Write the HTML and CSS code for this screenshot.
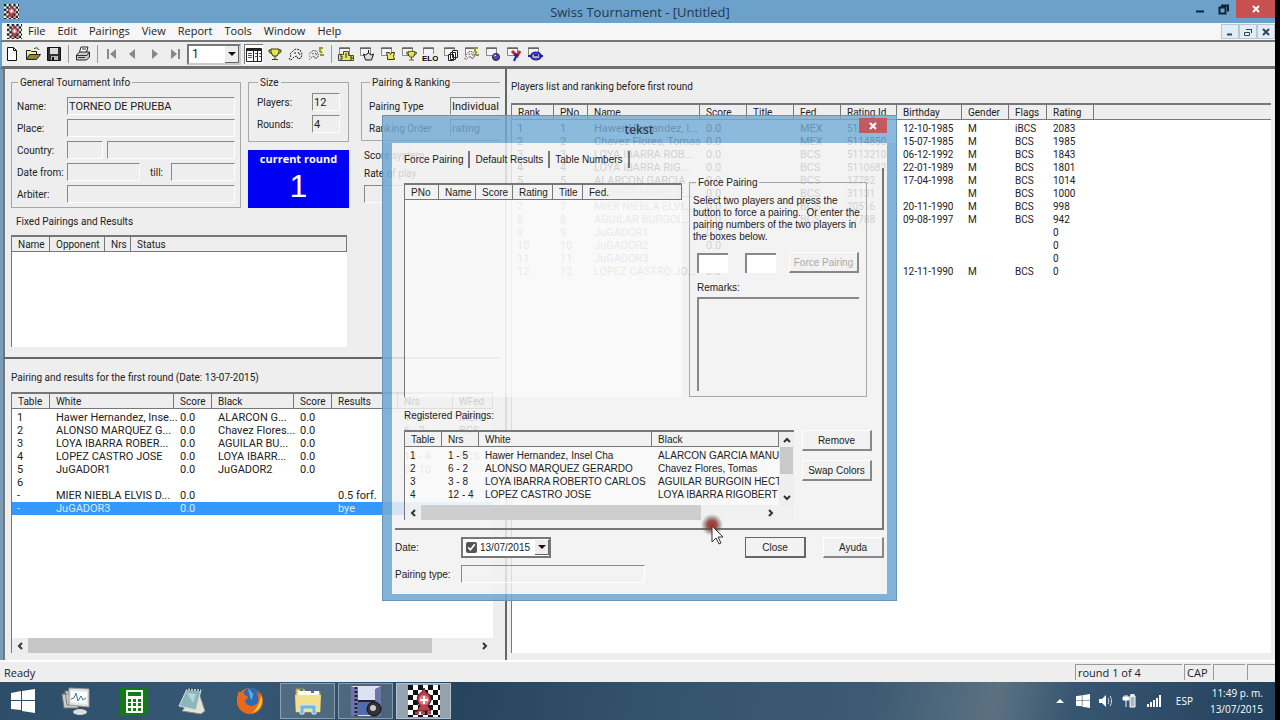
FILE: index.html
```
<!DOCTYPE html>
<html lang="en">
<head>
    <meta charset="UTF-8">
    <meta name="viewport" content="width=device-width, initial-scale=1.0">
    <title>Swiss Tournament - [Untitled]</title>
    <link rel="stylesheet" href="styles.css">
</head>
<body>
    <!-- shared icon shapes -->
    <svg class="defs" width="0" height="0">
        <defs>
            <pattern id="board" width="10" height="10" patternUnits="userSpaceOnUse">
                <rect width="10" height="10" fill="#fff"/>
                <path d="M0 0h5v5H0zM5 5h5v5H5z" fill="#111"/>
            </pattern>
            <symbol id="chess" viewBox="0 0 32 32">
                <rect width="32" height="32" fill="url(#board)"/>
                <path d="M16 3l2 4 4 3 1 6-3 5 3 5H9l3-5-3-5 1-6 4-3z" fill="#b8404e" stroke="#4c1720"/>
                <circle cx="16" cy="15" r="5" fill="#d97c84"/>
                <path d="M16 11v8M12 15h8" stroke="#fff" stroke-width="2"/>
                <path d="M7 28h18" stroke="#b8404e" stroke-width="3" stroke-dasharray="4 2"/>
            </symbol>
            <symbol id="sheet" viewBox="0 0 16 16">
                <path d="M1.500 1.500h10v8h-10z" fill="#f4f4f4" stroke="#888"/>
                <path d="M1 2.500h11" stroke="#666"/>
            </symbol>
            <symbol id="cup" viewBox="0 0 16 16">
                <path d="M4 3h8v3l-2 4H6L4 6zM4 4H2v2l3 2M12 4h2v2l-3 2M8 10v3M5 13.500h6" fill="#e4e650" stroke="#3a3a10"/>
            </symbol>
            <symbol id="horse" viewBox="0 0 16 16">
                <path d="M2 8l4-4 2-1 4 1 2 4-1 4-3 1-1-3-3 1-3 3-2-1 2-3z" fill="#eee" stroke="#222" stroke-dasharray="2 1"/>
                <path d="M6 7h2M10 6l2 3" stroke="#222"/>
            </symbol>
            <symbol id="winlogo" viewBox="0 0 24 24">
                <path d="M0 4l10-2v9H0zM11 2l13-2v11H11zM0 12h10v9L0 20zM11 12h13v12l-13-2z" fill="#fff"/>
            </symbol>
        </defs>
    </svg>

    <div class="desktop">
        <header class="title-bar">
            <svg class="app-icon"><use href="#chess"/></svg>
            <h1 class="window-title">Swiss Tournament - [Untitled]</h1>
            <div class="window-buttons">
                <button aria-label="Minimize"><svg width="10" height="10"><path d="M1 7.500h8" stroke="#123" stroke-width="2"/></svg></button>
                <button aria-label="Restore"><svg width="12" height="12"><path d="M1.500 4.500h6v6h-6zM3 2.500h7v6" fill="none" stroke="#123" stroke-width="2"/></svg></button>
                <button class="close" aria-label="Close"><svg width="10" height="10"><path d="M2 2l6 6M8 2L2 8" stroke="#fff" stroke-width="2"/></svg></button>
            </div>
        </header>

        <nav class="menu-bar">
            <svg class="app-icon"><use href="#chess"/></svg>
            <a href="#">File</a>
            <a href="#">Edit</a>
            <a href="#">Pairings</a>
            <a href="#">View</a>
            <a href="#">Report</a>
            <a href="#">Tools</a>
            <a href="#">Window</a>
            <a href="#">Help</a>
            <div class="mdi-buttons">
                <button aria-label="Minimize document"><svg width="10" height="10"><path d="M2 7.500h5" stroke="#345" stroke-width="2"/></svg></button>
                <button aria-label="Restore document"><svg width="10" height="10"><path d="M1.500 5.500h5v3h-5zM3 2.500h6M8.500 3v3" fill="none" stroke="#345"/></svg></button>
                <button aria-label="Close document"><svg width="10" height="10"><path d="M2 2l6 6M8 2L2 8" stroke="#345" stroke-width="2"/></svg></button>
            </div>
        </nav>

        <div class="toolbar">
            <button aria-label="New"><svg viewBox="0 0 16 16"><path d="M3.500 1.500h6l3 3v10h-9zM9.500 1.500v3h3" fill="#fff" stroke="#111"/></svg></button>
            <button aria-label="Open"><svg viewBox="0 0 16 16"><path d="M1.500 13.500v-9h4l1 1h5v3" fill="#f0ee8a" stroke="#222"/><path d="M1.500 13.500l3-5h11l-4 5z" fill="#8c8a20" stroke="#222"/><path d="M9 3c2-2 4-1 5 1" fill="none" stroke="#222"/></svg></button>
            <button aria-label="Save"><svg viewBox="0 0 16 16"><path d="M1.500 1.500h13v13h-13z" fill="#333" stroke="#111"/><path d="M4 2h8v6H4z" fill="#ddd"/><path d="M5 10h7v4H5z" fill="#bbb"/><path d="M6 11h2v3H6z" fill="#111"/></svg></button>
            <span class="tool-line"></span>
            <button aria-label="Print"><svg viewBox="0 0 16 16"><path d="M4.500 6l1.500-5h7l-1.500 5" fill="#fff" stroke="#222"/><path d="M1.500 9l3-3h10v5l-3 3h-10z" fill="#ccc" stroke="#222"/><path d="M2 9.500h10l2-3M3 11.500h7M7 3h4" stroke="#333" fill="none"/></svg></button>
            <span class="tool-line"></span>
            <button aria-label="First round" disabled><svg viewBox="0 0 16 16"><path d="M3 3h2v10H3zM12 3v10L6 8z" fill="#888"/></svg></button>
            <button aria-label="Previous round" disabled><svg viewBox="0 0 16 16"><path d="M10 3v10L4 8z" fill="#888"/></svg></button>
            <button aria-label="Next round" disabled><svg viewBox="0 0 16 16"><path d="M6 3v10l6-5z" fill="#888"/></svg></button>
            <button aria-label="Last round" disabled><svg viewBox="0 0 16 16"><path d="M11 3h2v10h-2zM4 3v10l6-5z" fill="#888"/></svg></button>
            <div class="combo">
                <select aria-label="Round"><option>1</option></select>
                <span class="combo-arrow"></span>
            </div>
            <button class="pressed" aria-label="Overview"><svg viewBox="0 0 16 16"><path d="M.5 1.500h15v13H.5z" fill="#fff" stroke="#222"/><path d="M0 3h16" stroke="#222" stroke-width="2"/><path d="M7.500 3v11M11.500 3v11" stroke="#222"/><path d="M2 6.500h4M2 8.500h4M2 10.500h4M9 6.500h2M9 9.500h2M13 6.500h2M13 9.500h2" stroke="#555"/></svg></button>
            <button aria-label="Ranking"><svg viewBox="0 0 16 16"><use href="#cup"/></svg></button>
            <button aria-label="Players"><svg viewBox="0 0 16 16"><use href="#horse"/></svg></button>
            <button aria-label="Pairings"><svg viewBox="0 0 16 16"><use href="#horse" x="-2" y="2" width="13" height="13"/><path d="M14 2h-3v3l2 2M15 9h-4" fill="none" stroke="#999a22" stroke-width="2"/></svg></button>
            <span class="tool-line"></span>
            <button aria-label="Podium"><svg viewBox="0 0 16 16"><use href="#sheet"/><path d="M.5 8.500h5v-3h5v4h5v5H.5z" fill="#e8ea5c" stroke="#444"/><path d="M2 10h2v3H2M8 7v5M12 11h2v2h-2" fill="none" stroke="#222"/></svg></button>
            <button aria-label="King report"><svg viewBox="0 0 16 16"><use href="#sheet"/><path d="M4.500 8l2 1 3-2 3 2 2-1-2 6h-6zM9.500 4v3" fill="#ddd" stroke="#111"/></svg></button>
            <button aria-label="Cross table"><svg viewBox="0 0 16 16"><use href="#sheet"/><path d="M6.500 6.500h3l1 2 1-2h3l-1 4 1 3h-7v-3z" fill="#e8ea5c" stroke="#333"/></svg></button>
            <button aria-label="Cup report"><svg viewBox="0 0 16 16"><use href="#sheet"/><use href="#cup" x="4" y="3" width="13" height="13"/></svg></button>
            <button aria-label="ELO report"><svg viewBox="0 0 16 16"><use href="#sheet"/><path d="M0 8h16v8H0z" fill="#eee"/><text class="elo" x="0" y="15">ELO</text></svg></button>
            <button aria-label="Cards"><svg viewBox="0 0 16 16"><use href="#sheet"/><path d="M9.500 4.500h5v7h-5zM7.500 6.500h5v7h-5zM5.500 8.500h5v6h-5z" fill="#fff" stroke="#222"/></svg></button>
            <button aria-label="Horse report"><svg viewBox="0 0 16 16"><use href="#sheet"/><use href="#horse" y="3" width="12" height="12"/><path d="M14 2h-3v3l2 2M15 9h-3" fill="none" stroke="#999a22" stroke-width="2"/></svg></button>
            <button aria-label="Web export"><svg viewBox="0 0 16 16"><use href="#sheet"/><circle cx="11" cy="11" r="3.500" fill="#4a4ab0" stroke="#223"/><path d="M9 10l2-1" stroke="#fff"/></svg></button>
            <button aria-label="Federation export"><svg viewBox="0 0 16 16"><use href="#sheet"/><path d="M6 5l5 5 3-5" fill="none" stroke="#c23" stroke-width="3"/><path d="M11 8l-3 7M8 9h4" stroke="#22a" stroke-width="2"/></svg></button>
            <button aria-label="Connect"><svg viewBox="0 0 16 16"><use href="#sheet"/><ellipse cx="9" cy="10" rx="5" ry="3.500" fill="#aab" stroke="#22a" stroke-width="2"/><path d="M1 10h4M12 10h4M7 9h4" stroke="#22a" stroke-width="2"/></svg></button>
        </div>

        <main class="workspace">
            <div class="left-column">
                <section class="info-panel">
                    <div class="info-top">
                        <fieldset class="group general">
                            <legend>General Tournament Info</legend>
                            <div class="field-row"><label for="t-name">Name:</label><input id="t-name" value="TORNEO DE PRUEBA" readonly></div>
                            <div class="field-row"><label for="t-place">Place:</label><input id="t-place" readonly></div>
                            <div class="field-row"><label for="t-country">Country:</label><input id="t-country" class="code" readonly><input aria-label="Country name" readonly></div>
                            <div class="field-row"><label for="t-from">Date from:</label><input id="t-from" class="date" readonly><label class="till" for="t-till">till:</label><input id="t-till" readonly></div>
                            <div class="field-row"><label for="t-arbiter">Arbiter:</label><input id="t-arbiter" readonly></div>
                        </fieldset>
                        <div class="size-column">
                            <fieldset class="group size">
                                <legend>Size</legend>
                                <div class="field-row"><label for="t-players">Players:</label><input id="t-players" value="12" readonly></div>
                                <div class="field-row"><label for="t-rounds">Rounds:</label><input id="t-rounds" value="4" readonly></div>
                            </fieldset>
                            <div class="current-round">
                                <span>current round</span>
                                <strong>1</strong>
                            </div>
                        </div>
                        <div class="ranking-column">
                            <fieldset class="group ranking">
                                <legend>Pairing &amp; Ranking</legend>
                                <div class="field-row"><label for="t-type">Pairing Type</label><input id="t-type" value="Individual compet" readonly></div>
                                <div class="field-row"><label for="t-order">Ranking Order</label><input id="t-order" value="rating" readonly></div>
                            </fieldset>
                            <div class="rates">
                                <p>Score system</p>
                                <label for="t-rate">Rate of play</label>
                                <input id="t-rate" readonly>
                            </div>
                        </div>
                    </div>
                    <h2 class="caption fixed-caption">Fixed Pairings and Results</h2>
                    <div class="list fixed-list">
                        <table>
                            <thead><tr><th class="w38">Name</th><th class="w55">Opponent</th><th class="w26">Nrs</th><th>Status</th></tr></thead>
                        </table>
                    </div>
                </section>

                <section class="pairing-panel">
                    <h2 class="caption">Pairing and results for the first round (Date: 13-07-2015)</h2>
                    <div class="list pairing-list">
                        <table>
                            <thead><tr><th class="w38">Table</th><th class="w124">White</th><th class="w38">Score</th><th class="w82">Black</th><th class="w38">Score</th><th class="w66">Results</th><th class="w55">Nrs</th><th>WFed</th></tr></thead>
                            <tbody>
                                <tr><td>1</td><td>Hawer Hernandez, Inse...</td><td>0.0</td><td>ALARCON G...</td><td>0.0</td><td></td><td>1 - 5</td><td>MEX</td></tr>
                                <tr><td>2</td><td>ALONSO MARQUEZ G...</td><td>0.0</td><td>Chavez Flores...</td><td>0.0</td><td></td><td>6 - 2</td><td>BCS</td></tr>
                                <tr><td>3</td><td>LOYA IBARRA ROBER...</td><td>0.0</td><td>AGUILAR BU...</td><td>0.0</td><td></td><td>3 - 8</td><td>BCS</td></tr>
                                <tr><td>4</td><td>LOPEZ CASTRO JOSE</td><td>0.0</td><td>LOYA IBARR...</td><td>0.0</td><td></td><td>12 - 4</td><td>BCS</td></tr>
                                <tr><td>5</td><td>JuGADOR1</td><td>0.0</td><td>JuGADOR2</td><td>0.0</td><td></td><td>9 - 10</td><td></td></tr>
                                <tr><td>6</td><td></td><td></td><td></td><td></td><td></td><td></td><td></td></tr>
                                <tr><td>-</td><td>MIER NIEBLA ELVIS D...</td><td>0.0</td><td></td><td></td><td>0.5 forf.</td><td></td><td></td></tr>
                                <tr class="selected"><td>-</td><td>JuGADOR3</td><td>0.0</td><td></td><td></td><td>bye</td><td></td><td></td></tr>
                            </tbody>
                        </table>
                        <div class="h-scroll">
                            <button aria-label="Scroll left"><svg width="8" height="8"><path d="M6 1L3 4l3 3" fill="none" stroke="#333" stroke-width="2"/></svg></button>
                            <div class="track"><div class="thumb"></div></div>
                            <button aria-label="Scroll right"><svg width="8" height="8"><path d="M2 1l3 3-3 3" fill="none" stroke="#333" stroke-width="2"/></svg></button>
                        </div>
                    </div>
                </section>
            </div>

            <section class="players-panel">
                <h2 class="caption">Players list and ranking before first round</h2>
                <div class="list players-list">
                    <table>
                        <thead><tr><th class="w42">Rank</th><th class="w34">PNo</th><th class="w112">Name</th><th class="w47">Score</th><th class="w47">Title</th><th class="w47">Fed</th><th class="w56">Rating Id</th><th class="w65">Birthday</th><th class="w47">Gender</th><th class="w38">Flags</th><th class="w47">Rating</th><th class="rest"></th></tr></thead>
                        <tbody>
                            <tr><td>1</td><td>1</td><td>Hawer Hernandez, I...</td><td>0.0</td><td></td><td>MEX</td><td>5112346</td><td>12-10-1985</td><td>M</td><td>iBCS</td><td>2083</td><td></td></tr>
                            <tr><td>2</td><td>2</td><td>Chavez Flores, Tomas</td><td>0.0</td><td></td><td>MEX</td><td>5114850</td><td>15-07-1985</td><td>M</td><td>BCS</td><td>1985</td><td></td></tr>
                            <tr><td>3</td><td>3</td><td>LOYA IBARRA ROB...</td><td>0.0</td><td></td><td>BCS</td><td>5113210</td><td>06-12-1992</td><td>M</td><td>BCS</td><td>1843</td><td></td></tr>
                            <tr><td>4</td><td>4</td><td>LOYA IBARRA RIG...</td><td>0.0</td><td></td><td>BCS</td><td>5110682</td><td>22-01-1989</td><td>M</td><td>BCS</td><td>1801</td><td></td></tr>
                            <tr><td>5</td><td>5</td><td>ALARCON GARCIA ...</td><td>0.0</td><td></td><td>BCS</td><td>17782</td><td>17-04-1998</td><td>M</td><td>BCS</td><td>1014</td><td></td></tr>
                            <tr><td>6</td><td>6</td><td>ALONSO MARQUE...</td><td>0.0</td><td></td><td>BCS</td><td>31131</td><td></td><td>M</td><td>BCS</td><td>1000</td><td></td></tr>
                            <tr><td>7</td><td>7</td><td>MIER NIEBLA ELVI...</td><td>0.0</td><td></td><td>BCS</td><td>20516</td><td>20-11-1990</td><td>M</td><td>BCS</td><td>998</td><td></td></tr>
                            <tr><td>8</td><td>8</td><td>AGUILAR BURGOI...</td><td>0.0</td><td></td><td>BCS</td><td>17788</td><td>09-08-1997</td><td>M</td><td>BCS</td><td>942</td><td></td></tr>
                            <tr><td>9</td><td>9</td><td>JuGADOR1</td><td>0.0</td><td></td><td></td><td></td><td></td><td></td><td></td><td>0</td><td></td></tr>
                            <tr><td>10</td><td>10</td><td>JuGADOR2</td><td>0.0</td><td></td><td></td><td></td><td></td><td></td><td></td><td>0</td><td></td></tr>
                            <tr><td>11</td><td>11</td><td>JuGADOR3</td><td>0.0</td><td></td><td></td><td></td><td></td><td></td><td></td><td>0</td><td></td></tr>
                            <tr><td>12</td><td>12</td><td>LOPEZ CASTRO JO...</td><td>0.0</td><td></td><td></td><td></td><td>12-11-1990</td><td>M</td><td>BCS</td><td>0</td><td></td></tr>
                        </tbody>
                    </table>
                </div>
            </section>
        </main>

        <div class="status-bar">
            <span class="ready">Ready</span>
            <span class="pane round">round 1 of 4</span>
            <span class="pane cap">CAP</span>
            <span class="pane"></span>
            <span class="pane last"></span>
        </div>

        <footer class="taskbar">
            <button class="task" aria-label="Start"><svg width="26" height="24" viewBox="0 0 24 24"><use href="#winlogo"/></svg></button>
            <button class="task" aria-label="Monitor"><svg width="30" height="30" viewBox="0 0 30 30"><path d="M1 8h16v14H3zM4 5h16v14H6z" fill="#c9d0d2" stroke="#777"/><path d="M8 2l20 1v18l-20-2z" fill="#e4e4e0" stroke="#999"/><path d="M10 5l16 1v12l-16-2z" fill="#fff"/><path d="M10 13l3-1 2-5 2 8 3-5 2 4 3-2" fill="none" stroke="#3276ac"/><ellipse cx="19" cy="26" rx="7" ry="3" fill="#ddd"/></svg></button>
            <button class="task" aria-label="Calculator"><svg width="28" height="28" viewBox="0 0 28 28"><path d="M0 0h28v28H0z" fill="#117b16"/><path d="M6 3h17v23H6z" fill="#fff"/><path d="M8 5h13v4H8zM8 12h3v3H8zM13 12h3v3h-3zM18 12h3v3h-3zM8 16h3v3H8zM13 16h3v3h-3zM18 16h3v3h-3zM8 21h3v3H8zM13 21h3v3h-3zM18 21h3v3h-3z" fill="#117b16"/></svg></button>
            <button class="task" aria-label="Notes"><svg width="28" height="28" viewBox="0 0 28 28"><path d="M20 3l7 21-4 3-19-3z" fill="#e7e3cf" stroke="#888"/><path d="M9 2l14 1-5 20-17-4z" fill="#8cb5bd" stroke="#d5dfe0"/><path d="M9 6l9 1-3 9z" fill="#b6d3d6"/><path d="M9 2l14 1" stroke="#333" stroke-dasharray="1 2" stroke-width="2"/></svg></button>
            <button class="task" aria-label="Firefox"><svg width="30" height="30" viewBox="0 0 30 30"><circle cx="15" cy="15" r="13" fill="#e76a1c"/><circle cx="16" cy="11" r="9" fill="#2a6bb4"/><path d="M13 3c4 1 3 5 6 5-3 2 0 4-3 6z" fill="#58b2df"/><path d="M4 5c1 2 3 2 5 2 0 3 5 3 4 5-2 1-4 2-2 5 3 5 10 4 12-1 1-4 0-7-2-10 5 3 8 8 6 13-2 8-11 11-18 7C0 21 1 12 4 5z" fill="#e8691d"/><path d="M26 9c3 8-1 16-9 18 4-3 8-9 9-18z" fill="#f7cd35"/></svg></button>
            <button class="task open" aria-label="Explorer"><svg width="30" height="30" viewBox="0 0 30 30"><path d="M3 3h8l2 3h14v20H3z" fill="#e9cf72" stroke="#b8993c"/><path d="M5 5h21v5H5z" fill="#fff"/><path d="M2 9h26l-1 17H3z" fill="#f3e08f"/><path d="M7 28v-9h16v9h-4v-5h-8v5z" fill="#72b8dd" stroke="#c6e4f2"/><path d="M7 4h3M18 6h3" stroke="#4a8c3c" stroke-width="2"/></svg></button>
            <button class="task open" aria-label="Video capture"><svg width="32" height="32" viewBox="0 0 32 32"><path d="M1 1h30v30H1z" fill="#dce2f4"/><path d="M1 1l7 3v27H1zM31 1l-6 3v27h6z" fill="#6e75a8"/><path d="M8 16h18v14H8z" fill="#506bae"/><path d="M6 2v29" stroke="#223" stroke-width="3" stroke-dasharray="2 2"/><path d="M8 16h17" stroke="#223" stroke-width="2"/><circle cx="24" cy="24" r="7" fill="#333" stroke="#111"/><circle cx="23" cy="23" r="3" fill="#ccc"/></svg></button>
            <button class="task open active" aria-label="Swiss Tournament"><svg width="32" height="32"><use href="#chess"/></svg></button>
            <div class="tray">
                <button class="tray-more" aria-label="Show hidden icons"><svg width="8" height="6"><path d="M0 5l4-4 4 4z" fill="#fff"/></svg></button>
                <svg width="14" height="14" viewBox="0 0 24 24"><use href="#winlogo"/></svg>
                <svg width="16" height="14" viewBox="0 0 16 14"><path d="M1 5h3l4-4v12L4 9H1z" fill="#fff"/><path d="M10 4c1 2 1 4 0 6M12 2c2 3 2 7 0 10" fill="none" stroke="#dde"/></svg>
                <svg width="16" height="14" viewBox="0 0 16 14"><path d="M8 2h5v11H8zM9 0h3v2H9z" fill="#aab6c0" stroke="#fff"/><path d="M1 3h6v3H1zM3 1v2M5 1v2M4 6v7" fill="#fff" stroke="#fff"/></svg>
                <svg width="16" height="14" viewBox="0 0 16 14"><path d="M1 10h2v3H1zM4 8h2v5H4zM7 6h2v7H7zM10 4h2v9h-2zM13 1h2v12h-2z" fill="#fff"/></svg>
                <span class="lang">ESP</span>
                <span class="clock">11:49 p. m.<br>13/07/2015</span>
            </div>
        </footer>
    </div>

    <!-- pairing dialog, fading in above the main window -->
    <div class="dialog" role="dialog" aria-labelledby="dialog-title">
        <div class="dialog-title">
            <h2 id="dialog-title">tekst</h2>
            <button class="dialog-close" aria-label="Close dialog"><svg width="8" height="8"><path d="M1 1l6 6M7 1L1 7" stroke="#fff" stroke-width="2"/></svg></button>
        </div>
        <div class="dialog-body">
            <div class="tabs">
                <button class="tab current">Force Pairing</button>
                <button class="tab">Default Results</button>
                <button class="tab">Table Numbers</button>
            </div>
            <div class="tab-page">
                <div class="force-row">
                    <div class="list force-list">
                        <table>
                            <thead><tr><th class="w34">PNo</th><th class="w37">Name</th><th class="w37">Score</th><th class="w40">Rating</th><th class="w30">Title</th><th>Fed.</th></tr></thead>
                        </table>
                    </div>
                    <fieldset class="group force-group">
                        <legend>Force Pairing</legend>
                        <p>Select two players and press the button to force a pairing.&nbsp; Or enter the pairing numbers of the two players in the boxes below.</p>
                        <div class="force-inputs">
                            <input aria-label="First player">
                            <input aria-label="Second player">
                            <button class="push" disabled>Force Pairing</button>
                        </div>
                        <label for="remarks">Remarks:</label>
                        <textarea id="remarks" readonly></textarea>
                    </fieldset>
                </div>
                <h3 class="caption">Registered Pairings:</h3>
                <div class="registered-row">
                    <div class="list registered-list">
                        <div class="registered-view">
                            <table>
                                <thead><tr><th class="w37">Table</th><th class="w37">Nrs</th><th class="w173">White</th><th>Black</th></tr></thead>
                                <tbody>
                                    <tr><td>1</td><td>1 - 5</td><td>Hawer Hernandez, Insel Cha</td><td>ALARCON GARCIA MANU</td></tr>
                                    <tr><td>2</td><td>6 - 2</td><td>ALONSO MARQUEZ GERARDO</td><td>Chavez Flores, Tomas</td></tr>
                                    <tr><td>3</td><td>3 - 8</td><td>LOYA IBARRA ROBERTO CARLOS</td><td>AGUILAR BURGOIN HECT</td></tr>
                                    <tr><td>4</td><td>12 - 4</td><td>LOPEZ CASTRO JOSE</td><td>LOYA IBARRA RIGOBERT</td></tr>
                                </tbody>
                            </table>
                            <div class="v-scroll">
                                <button aria-label="Scroll up"><svg width="8" height="8"><path d="M1 6l3-3 3 3" fill="none" stroke="#333" stroke-width="2"/></svg></button>
                                <div class="v-thumb"></div>
                                <button aria-label="Scroll down"><svg width="8" height="8"><path d="M1 2l3 3 3-3" fill="none" stroke="#333" stroke-width="2"/></svg></button>
                            </div>
                        </div>
                        <div class="h-scroll">
                            <button aria-label="Scroll left"><svg width="8" height="8"><path d="M6 1L3 4l3 3" fill="none" stroke="#333" stroke-width="2"/></svg></button>
                            <div class="track"><div class="thumb"></div></div>
                            <button aria-label="Scroll right"><svg width="8" height="8"><path d="M2 1l3 3-3 3" fill="none" stroke="#333" stroke-width="2"/></svg></button>
                        </div>
                    </div>
                    <div class="side-buttons">
                        <button class="push">Remove</button>
                        <button class="push">Swap Colors</button>
                    </div>
                </div>
            </div>
            <div class="dialog-row">
                <label for="round-date">Date:</label>
                <div class="date-picker">
                    <input type="checkbox" aria-label="Use date" checked>
                    <input id="round-date" value="13/07/2015">
                    <span class="combo-arrow"></span>
                </div>
                <button class="push default">Close</button>
                <button class="push">Ayuda</button>
            </div>
            <div class="dialog-row type-row">
                <label for="pairing-type">Pairing type:</label>
                <input id="pairing-type" class="type-field" readonly>
            </div>
        </div>
    </div>

    <div class="pointer">
        <svg width="36" height="36" viewBox="0 0 36 36">
            <defs><radialGradient id="click"><stop offset="0" stop-color="#c62a1c"/><stop offset=".4" stop-color="#8a3a34" stop-opacity=".9"/><stop offset="1" stop-color="#555" stop-opacity="0"/></radialGradient></defs>
            <circle cx="14" cy="12" r="11" fill="url(#click)"/>
            <path d="M14 13v16l4-4 3 6 2-1-3-6h5z" fill="#fff" stroke="#333"/>
        </svg>
    </div>
</body>
</html>
```

FILE: styles.css
```
* {
    margin: 0;
    padding: 0;
    box-sizing: border-box;
}

body {
    height: 100vh;
    overflow: hidden;
    background: #000;
    color: #222;
    font-family: Roboto, "Liberation Sans", sans-serif;
    font-size: 10px;
    line-height: 13px;
}

button,
input,
select,
textarea {
    font: inherit;
    color: inherit;
    border: none;
    border-radius: 0;
    background: none;
    min-width: 0;
}

button {
    display: flex;
    align-items: center;
    justify-content: center;
}

svg {
    display: block;
    flex: none;
}

.defs {
    position: absolute;
}

/* main window */
.desktop {
    height: 100vh;
    margin-right: 5px;
    display: flex;
    flex-direction: column;
    background: #eee;
}

.title-bar {
    height: 23px;
    display: flex;
    align-items: center;
    background: #6ca1cb;
    padding-left: 4px;
}

.app-icon {
    width: 15px;
    height: 15px;
}

.window-title {
    flex: 1;
    padding-left: 73px;
    text-align: center;
    font: 400 13px "Open Sans", sans-serif;
    color: #1f3850;
}

.window-buttons {
    display: flex;
    align-self: flex-start;
}

.window-buttons button {
    width: 24px;
    height: 18px;
}

.window-buttons .close {
    width: 39px;
    background: #c75050;
}

.menu-bar {
    height: 19px;
    display: flex;
    align-items: center;
    gap: 12px;
    padding-left: 5px;
    background: #f6f6f6;
    border-bottom: 2px solid #777;
    border-left: 2px solid #6ca1cb;
    font: 11px/15px "Open Sans", sans-serif;
}

.menu-bar .app-icon {
    margin-right: -6px;
}

.menu-bar a {
    color: #222;
    text-decoration: none;
    padding-bottom: 2px;
}

.mdi-buttons {
    margin-left: auto;
    display: flex;
}

.mdi-buttons button {
    width: 18px;
    height: 15px;
    background: #e3edf6;
    border: 1px solid #b9c7d3;
}

.toolbar {
    height: 27px;
    display: flex;
    align-items: center;
    gap: 3px;
    padding-left: 1px;
    border-left: 2px solid #6ca1cb;
    border-bottom: 3px solid #6f6f6f;
}

.toolbar button {
    width: 18px;
    height: 20px;
}

.toolbar svg {
    width: 16px;
    height: 16px;
}

.toolbar .pressed {
    width: 19px;
    background: #fff;
    border-top: 1px solid #777;
    border-left: 1px solid #777;
}

.elo {
    font: 700 8px "Liberation Sans", sans-serif;
}

.tool-line {
    width: 1px;
    height: 18px;
    margin: 0 2px;
    background: #999;
}

.combo {
    width: 54px;
    height: 21px;
    display: flex;
    background: #fff;
    border: 2px solid #777;
    border-right-color: #ccc;
    border-bottom-color: #ccc;
}

.combo select {
    flex: 1;
    appearance: none;
    padding-left: 3px;
    font-size: 12px;
}

.combo-arrow {
    width: 14px;
    flex: none;
    display: flex;
    align-items: center;
    justify-content: center;
    background: #eee;
    border-right: 1px solid #666;
    border-bottom: 1px solid #666;
}

.combo-arrow::before {
    content: "";
    border: 4px solid transparent;
    border-top-color: #111;
    border-bottom: none;
}

/* workspace */
.workspace {
    flex: 1;
    min-height: 0;
    display: grid;
    grid-template-columns: 497px minmax(0, 1fr);
    column-gap: 5px;
    border-left: 3px solid #7a9cb8;
}

.left-column {
    display: flex;
    flex-direction: column;
    min-height: 0;
}

.info-panel,
.pairing-panel {
    padding-left: 6px;
    border-left: 2px solid #777;
    overflow: hidden;
}

.info-panel {
    padding-top: 7px;
    padding-bottom: 10px;
}

.info-top {
    display: flex;
    gap: 7px;
}

.group {
    border: 1px solid #a8a8a8;
    padding: 0 5px 4px;
    min-width: 0;
}

.group legend {
    margin-left: 1px;
    padding: 0 2px;
}

.general {
    width: 230px;
    flex: none;
}

.field-row {
    display: flex;
    align-items: center;
    margin-top: 4px;
}

.group legend + .field-row {
    margin-top: 8px;
}

.field-row label {
    width: 50px;
    flex: none;
    white-space: nowrap;
}

.field-row input,
.rates input,
.type-field {
    flex: 1;
    width: 0;
    height: 18px;
    padding-left: 1px;
    font-size: 11px;
    border: 1px solid #fff;
    border-top-color: #888;
    border-left-color: #888;
}

.field-row .code {
    flex: none;
    width: 36px;
    margin-right: 4px;
}

.field-row .date {
    flex: none;
    width: 73px;
}

.field-row .till {
    width: 31px;
    padding-left: 10px;
}

.size-column {
    width: 101px;
    flex: none;
    display: flex;
    flex-direction: column;
    gap: 8px;
}

.size {
    padding: 0 8px 8px;
}

.group.size legend + .field-row {
    margin-top: 4px;
}

.size label {
    width: 55px;
}

.current-round {
    flex: 1;
    display: flex;
    flex-direction: column;
    align-items: center;
    background: #0000f4;
    color: #fff;
    font: 700 11px/18px "Open Sans", sans-serif;
}

.current-round strong {
    font: 32px/36px "Liberation Sans", sans-serif;
}

.ranking-column {
    flex: none;
    width: 200px;
    padding-left: 5px;
}

.ranking {
    padding: 0 7px 3px;
}

.ranking label {
    width: 81px;
}

.ranking input {
    border-bottom-color: #eee;
}

.rates {
    display: flex;
    flex-direction: column;
    gap: 5px;
    padding: 8px 3px 0;
}

.rates input {
    flex: none;
    width: 100%;
}

.caption {
    font-size: 10px;
    font-weight: 400;
    line-height: 13px;
}

.info-panel .caption,
.pairing-panel .caption,
.players-panel .caption {
    flex: none;
}

.fixed-caption {
    padding: 7px 5px;
}

.list {
    display: flex;
    flex-direction: column;
    background: #fff;
    border-top: 2px solid #777;
    border-left: 1px solid #777;
    overflow: hidden;
}

.fixed-list {
    width: 336px;
    height: 112px;
}

.pairing-panel {
    flex: 1;
    min-height: 0;
    display: flex;
    flex-direction: column;
    gap: 8px;
    border-top: 2px solid #666;
    padding-top: 12px;
    padding-bottom: 7px;
    padding-right: 7px;
}

.pairing-list,
.players-list {
    flex: 1;
    min-height: 0;
}

.players-panel {
    display: flex;
    flex-direction: column;
    gap: 10px;
    border-left: 2px solid #666;
    padding: 11px 4px 7px 4px;
    min-height: 0;
}

/* list tables */
table {
    width: 100%;
    table-layout: fixed;
    border-collapse: separate;
    border-spacing: 0;
}

th {
    height: 15px;
    padding-left: 6px;
    text-align: left;
    font-weight: 400;
    line-height: 13px;
    background: #eee;
    border-right: 1px solid #777;
    border-bottom: 1px solid #777;
    white-space: nowrap;
}

th.rest {
    border-right: none;
}

td {
    height: 13px;
    padding-left: 6px;
    font-size: 11px;
    line-height: 13px;
    white-space: nowrap;
}

.players-list td:nth-child(n + 7) {
    font-size: 10px;
}

td:first-child {
    padding-left: 5px;
}

tbody::before {
    content: "";
    display: block;
    height: 2px;
}

.selected td {
    background: #3399ff;
    color: #d8ecff;
}

.w26 { width: 26px; }
.w30 { width: 30px; }
.w34 { width: 34px; }
.w37 { width: 37px; }
.w38 { width: 38px; }
.w40 { width: 40px; }
.w42 { width: 42px; }
.w47 { width: 47px; }
.w55 { width: 55px; }
.w56 { width: 56px; }
.w65 { width: 65px; }
.w66 { width: 66px; }
.w82 { width: 82px; }
.w112 { width: 112px; }
.w124 { width: 124px; }
.w173 { width: 173px; }

.h-scroll {
    margin-top: auto;
    height: 15px;
    display: flex;
    background: #eee;
}

.h-scroll button {
    width: 16px;
}

.track {
    flex: 1;
}

.thumb {
    width: 90%;
    height: 100%;
    background: #c6c6c6;
}

/* status bar and taskbar */
.status-bar {
    height: 22px;
    display: flex;
    gap: 2px;
    align-items: center;
    padding-left: 4px;
    border-top: 2px solid #fff;
    font: 11px "Open Sans", sans-serif;
}

.ready {
    flex: 1;
}

.pane {
    width: 32px;
    height: 16px;
    padding-left: 2px;
    line-height: 15px;
    border-top: 1px solid #999;
    border-left: 1px solid #999;
}

.round {
    width: 107px;
}

.cap {
    width: 27px;
}

.last {
    width: 28px;
}

.taskbar {
    height: 38px;
    display: flex;
    align-items: center;
    gap: 3px;
    background: linear-gradient(100deg, #2d4d68, #365975 18%, #26445e 36%, #34536d 52%, #3c5a73 68%, #5b7181 78%, #375671 84%, #23415c);
    color: #fff;
}

.task {
    width: 55px;
    height: 36px;
}

.task:first-child {
    width: 45px;
}

.open {
    background: rgba(255, 255, 255, .15);
    border: 1px solid rgba(255, 255, 255, .35);
}

.active {
    background: rgba(255, 255, 255, .5);
}

.tray {
    margin-left: auto;
    display: flex;
    align-items: center;
    gap: 8px;
    padding-right: 12px;
    font: 10px/16px "Open Sans", sans-serif;
}

.tray-more {
    margin-right: 4px;
}

.lang {
    margin: 0 9px 0 6px;
}

.clock {
    text-align: right;
}

/* dialog */
.dialog {
    position: absolute;
    left: 382px;
    top: 115px;
    width: 515px;
    display: flex;
    flex-direction: column;
    border: 1px solid #6596ba;
    font-family: "Liberation Sans", sans-serif;
}

.dialog-title {
    height: 27px;
    display: flex;
    align-items: center;
    background: rgba(115, 171, 212, .82);
}

.dialog-title h2 {
    flex: 1;
    padding-left: 36px;
    text-align: center;
    font: 600 12px "Open Sans", sans-serif;
    color: #2a4052;
}

.dialog-close {
    width: 28px;
    height: 15px;
    margin: 0 9px 8px 0;
    background: rgba(205, 75, 75, .85);
}

.dialog-body {
    padding: 8px 3px 11px;
    border: 9px solid rgba(115, 171, 212, .9);
    border-top: none;
    border-bottom-width: 6px;
    background: rgba(241, 241, 241, .84);
    background-clip: padding-box;
}

.tabs {
    display: flex;
    padding-left: 4px;
}

.tab {
    height: 17px;
    padding: 0 5px;
    border-right: 2px solid #777;
}

.tab-page {
    padding: 13px 10px 8px 9px;
    border-right: 2px solid #777;
    border-bottom: 2px solid #777;
}

.force-row {
    display: flex;
    gap: 7px;
    padding-right: 5px;
}

.dialog .list {
    background: rgba(255, 255, 255, .5);
}

.dialog .force-list {
    width: 278px;
    margin-top: 2px;
}

.dialog th {
    background: rgba(240, 240, 240, .7);
}

.dialog td {
    font-size: 10px;
}

.force-group {
    flex: 1;
    padding: 0 7px 5px;
    margin-top: -5px;
}

.force-group legend {
    margin-left: -1px;
}

.force-group p {
    line-height: 12px;
    margin: 6px -6px 9px -4px;
}

.force-inputs {
    display: flex;
    align-items: center;
    margin-bottom: 8px;
}

.force-inputs input {
    width: 31px;
    height: 20px;
    margin-right: 17px;
    background: #fff;
    border-top: 2px solid #888;
    border-left: 2px solid #888;
}

.force-inputs .push {
    flex: 1;
    margin-left: -4px;
}

.push {
    width: 70px;
    height: 21px;
    background: #f2f2f2;
    border: 1px solid #fff;
    border-right: 2px solid #888;
    border-bottom: 2px solid #888;
    white-space: nowrap;
}

.push:disabled {
    color: #aaa;
}

.force-group textarea {
    display: block;
    width: 100%;
    height: 94px;
    margin-top: 3px;
    resize: none;
    border-top: 2px solid #888;
    border-left: 2px solid #888;
}

.tab-page > .caption {
    padding: 12px 0 8px;
}

.registered-row {
    display: flex;
    gap: 8px;
}

.registered-list {
    flex: 1;
    height: 90px;
}

.registered-view {
    display: flex;
    flex: 1;
    min-height: 0;
}

.registered-view table {
    align-self: flex-start;
}

.v-scroll {
    width: 15px;
    flex: none;
    display: flex;
    flex-direction: column;
    align-items: center;
    background: #eee;
}

.v-scroll button {
    width: 15px;
    height: 15px;
}

.v-thumb {
    width: 13px;
    height: 27px;
    margin-bottom: auto;
    background: #c9c9c9;
}

.dialog .h-scroll {
    background: rgba(238, 238, 238, .8);
    padding-right: 15px;
}

.dialog .thumb {
    width: 82%;
    background: rgba(198, 198, 198, .8);
}

.side-buttons {
    display: flex;
    flex-direction: column;
    gap: 9px;
}

.dialog-row {
    display: flex;
    align-items: center;
    padding-top: 7px;
}

.dialog-row label {
    width: 66px;
}

.date-picker {
    width: 90px;
    height: 21px;
    display: flex;
    align-items: center;
    background: #fff;
    border: 2px solid #777;
    margin-right: auto;
}

.date-picker input[type="checkbox"] {
    width: 11px;
    height: 11px;
    margin: 0 3px;
    accent-color: #555;
}

.date-picker #round-date {
    flex: 1;
    width: 0;
}

.date-picker .combo-arrow {
    height: 15px;
}

.dialog-row .push {
    width: 61px;
    margin-left: 17px;
}

.dialog-row .default {
    border: 1px solid #666;
    border-right-width: 2px;
    border-bottom-width: 2px;
}

.dialog-row .type-field {
    flex: none;
    width: 184px;
}

/* click marker and mouse arrow */
.pointer {
    position: absolute;
    left: 698px;
    top: 513px;
    pointer-events: none;
}
```
